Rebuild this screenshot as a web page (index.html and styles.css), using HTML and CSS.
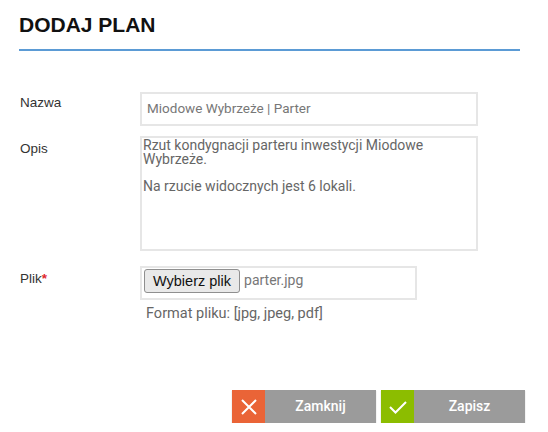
FILE: index.html
```html
<!DOCTYPE html>
<html lang="pl">
<head>
<meta charset="utf-8">
<link rel="stylesheet" href="styles.css">
</head>
<body>
<div class="modal">
  <h1 class="title">DODAJ PLAN</h1>
  <div class="form">
    <div class="row row-name">
      <label class="label">Nazwa</label>
      <div class="input">Miodowe Wybrzeże | Parter</div>
    </div>
    <div class="row row-desc">
      <label class="label">Opis</label>
      <div class="textarea">Rzut kondygnacji parteru inwestycji Miodowe Wybrzeże.<br><br>Na rzucie widocznych jest 6 lokali.</div>
    </div>
    <div class="row row-file">
      <label class="label">Plik<span class="req">*</span></label>
      <div class="file-col">
        <div class="file"><span class="file-btn">Wybierz plik</span><span class="file-name">parter.jpg</span></div>
        <div class="hint">Format pliku: [jpg, jpeg, pdf]</div>
      </div>
    </div>
  </div>
  <div class="actions">
    <button class="btn"><span class="ico ico-close"><svg width="16" height="16" viewBox="0 0 16 16"><path d="M1 1L15 15M15 1L1 15" stroke="#fff" stroke-width="2" fill="none"/></svg></span><span class="btn-text">Zamknij</span></button>
    <button class="btn"><span class="ico ico-ok"><svg width="18" height="14" viewBox="0 0 18 14"><path d="M1 7L6.5 12.5L17 2" stroke="#fff" stroke-width="2" fill="none"/></svg></span><span class="btn-text">Zapisz</span></button>
  </div>
</div>
</body>
</html>
```
FILE: styles.css
```css
* { box-sizing: border-box; }
body { margin: 0; background: #fff; font-family: "Liberation Sans", Arial, sans-serif; }
.modal { padding: 13px 28px 0 18px; }
.title { margin: 0 0 0 1px; font-size: 21px; font-weight: bold; color: #111; line-height: 24px; height: 38px; border-bottom: 2px solid #5b9bd5; }
.form { padding-top: 41px; }
.row { display: flex; }
.label { width: 122px; padding-left: 2px; font-size: 13.5px; color: #333; }
.row-name .label { padding-top: 3px; }
.input { width: 338px; height: 34px; border: 2px solid #e6e6e6; padding: 6px 0 0 5px; font-family: Roboto, sans-serif; font-size: 13.5px; color: #777; }
.row-desc { margin-top: 10px; }
.row-desc .label { padding-top: 5px; }
.textarea { width: 338px; height: 115px; border: 2px solid #e6e6e6; padding: 1px 0 0 1px; font-family: Roboto, sans-serif; font-size: 14px; line-height: 13.5px; color: #666; }
.row-file { margin-top: 15px; }
.row-file .label { padding-top: 5px; }
.req { color: #e0282d; font-weight: bold; }
.file { width: 277px; height: 34px; border: 2px solid #e6e6e6; display: flex; align-items: flex-start; padding: 1px 0 0 2px; }
.file-btn { display: inline-block; font-family: "Liberation Sans", Arial, sans-serif; font-size: 14.5px; color: #111; background: #e9e9e9; border: 1px solid #8f8f8f; border-radius: 3px; padding: 3px 8px 4px; height: 24px; line-height: 16px; }
.file-name { font-family: Roboto, sans-serif; font-size: 14px; color: #777; margin-left: 4px; padding-top: 3px; }
.hint { margin-top: 5px; padding-left: 6px; font-family: Roboto, sans-serif; font-size: 14.5px; color: #666; }
.actions { display: flex; justify-content: flex-end; gap: 5px; margin-top: 68px; margin-right: -5px; }
.btn { display: flex; width: 144px; height: 33px; padding: 0; border: 0; background: #9b9b9b; box-shadow: 0 1px 1px #bbb; cursor: pointer; }
.ico { width: 33px; height: 33px; display: flex; align-items: center; justify-content: center; }
.ico-close { background: #ea6437; }
.ico-ok { background: #8cbd00; }
.btn-text { flex: 1; display: flex; align-items: center; justify-content: center; padding-bottom: 2px; font-family: Roboto, sans-serif; font-weight: 500; font-size: 14px; color: #fff; }
```
